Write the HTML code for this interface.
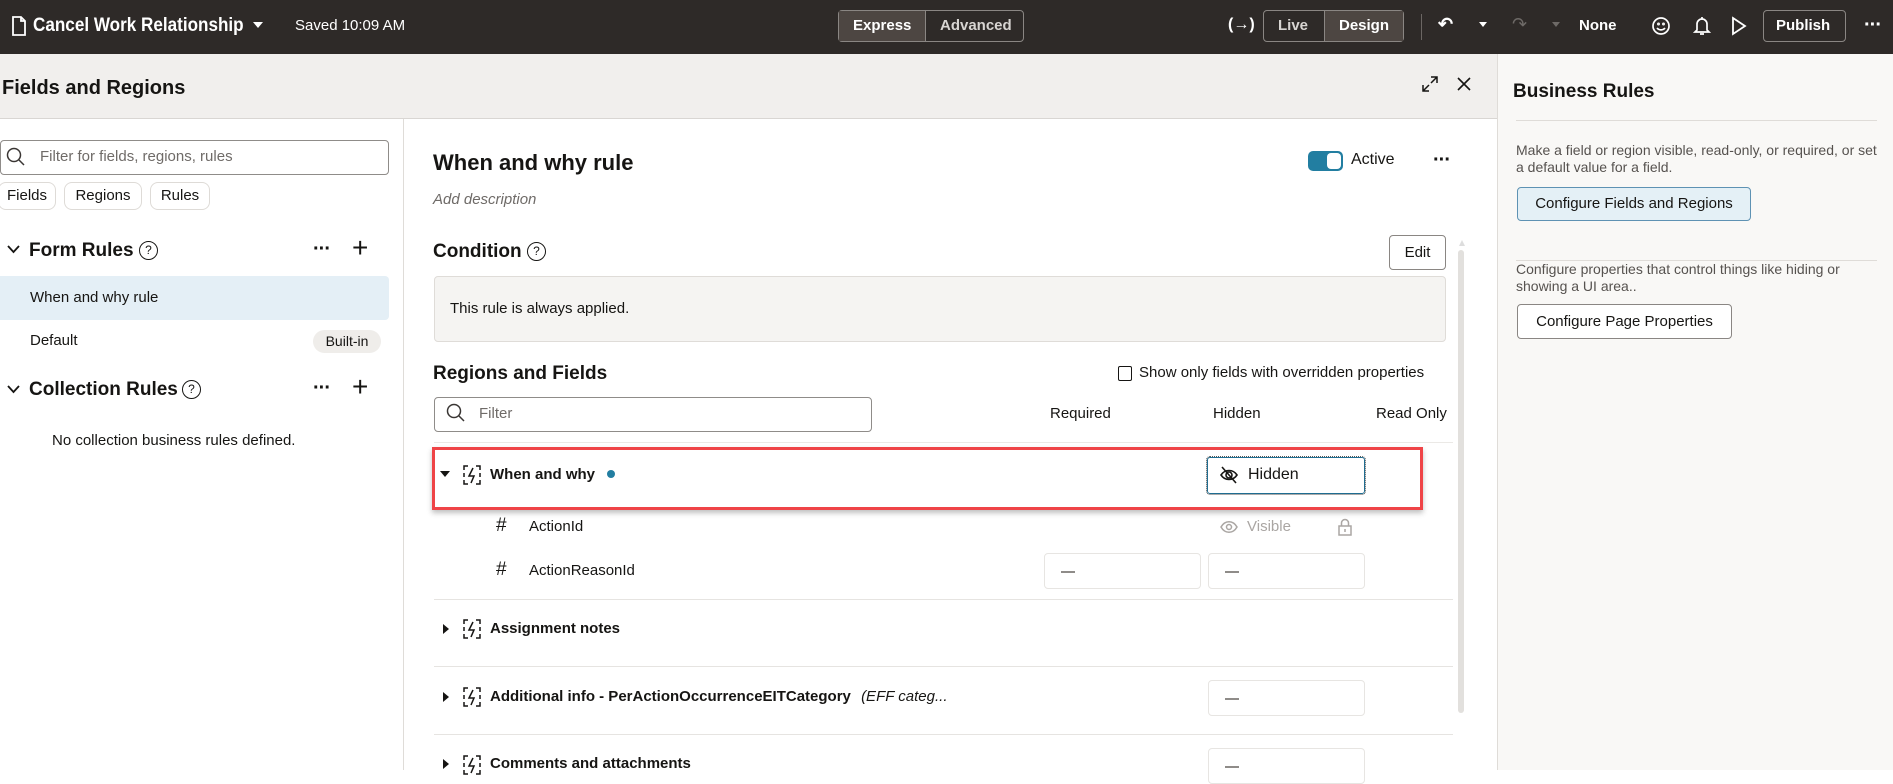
<!DOCTYPE html>
<html><head><meta charset="utf-8"><style>
*{box-sizing:border-box;margin:0;padding:0}
body{width:1893px;height:770px;overflow:hidden;background:#fff;font-family:"Liberation Sans",sans-serif;color:#161513;position:relative;font-size:15px}
.a{position:absolute;white-space:nowrap}
.hdr{left:0;top:0;width:1893px;height:54px;background:#2e2a28;color:#fff}
.seg{border:1px solid #8a8683;border-radius:4px;height:32px;top:10px;display:flex}
.seg div{padding:0 14px;line-height:30px;font-size:15px;font-weight:bold;color:#d8d5d2}
.seg .on{background:#4d4642;color:#fff}
.b{font-weight:bold}
.btn{border:1px solid #8a8683;border-radius:4px;background:#fff;font-size:15px;font-weight:bold;text-align:center}
.chip{border:1px solid #dedbd7;border-radius:8px;height:28px;line-height:26px;font-size:15px;text-align:center;top:182px}
.line{height:1px;background:#dfdcd8}
.box{border:1px solid #e7e5e2;border-radius:4px;height:36px}
.dash{width:14px;height:2px;background:#8f8c89}
.q{width:19px;height:19px;border:1.5px solid #161513;border-radius:50%;font-size:12px;text-align:center;line-height:16px}
.dots{font-weight:bold;font-size:20px;letter-spacing:-1px}
</style></head><body>
<div class="a hdr"></div>
<svg class="a" style="left:11px;top:16px" width="16" height="20" viewBox="0 0 16 20"><path d="M2 1h8l4 4v14H2z M10 1v4h4" fill="none" stroke="#fff" stroke-width="1.8"/></svg>
<div class="a b" style="left:33px;top:15px;font-size:19px;color:#fff;transform:scaleX(.9);transform-origin:left">Cancel Work Relationship</div>
<div class="a" style="left:253px;top:22px;width:0;height:0;border-left:5px solid transparent;border-right:5px solid transparent;border-top:6px solid #fff"></div>
<div class="a" style="left:295px;top:17px;font-size:15px;color:#fff">Saved 10:09 AM</div>
<div class="a seg" style="left:838px;width:186px"><div class="on" style="width:86px">Express</div><div style="border-left:1px solid #8a8683">Advanced</div></div>
<div class="a b" style="left:1228px;top:16px;color:#fff;font-size:16px">(→)</div>
<div class="a seg" style="left:1263px;width:141px"><div style="width:60px">Live</div><div class="on" style="border-left:1px solid #8a8683;flex:1">Design</div></div>
<div class="a" style="left:1421px;top:14px;width:1px;height:26px;background:#6b6663"></div>
<div class="a b" style="left:1438px;top:14px;color:#fff;font-size:18px">↶</div>
<div class="a" style="left:1479px;top:22px;border-left:4px solid transparent;border-right:4px solid transparent;border-top:5px solid #fff"></div>
<div class="a" style="left:1512px;top:14px;color:#6e6a67;font-size:18px">↷</div>
<div class="a" style="left:1552px;top:22px;border-left:4px solid transparent;border-right:4px solid transparent;border-top:5px solid #6e6a67"></div>
<div class="a b" style="left:1579px;top:17px;color:#fff;font-size:15px">None</div>
<svg class="a" style="left:1651px;top:16px" width="20" height="20" viewBox="0 0 20 20" fill="none" stroke="#fff" stroke-width="1.7"><circle cx="10" cy="10" r="8"/><path d="M6 12c2 2.5 6 2.5 8 0"/><circle cx="7.5" cy="8" r=".6"/><circle cx="12.5" cy="8" r=".6"/></svg>
<svg class="a" style="left:1693px;top:15px" width="18" height="22" viewBox="0 0 18 22" fill="none" stroke="#fff" stroke-width="1.7"><path d="M4 15V9a5 5 0 0110 0v6l2 2H2z M7 19h4 M9 2v2"/></svg>
<svg class="a" style="left:1731px;top:16px" width="16" height="20" viewBox="0 0 16 20" fill="none" stroke="#fff" stroke-width="1.8"><path d="M2 2l12 8-12 8z"/></svg>
<div class="a seg" style="left:1763px;width:83px"><div style="color:#fff;padding:0 12px">Publish</div></div>
<div class="a dots" style="left:1864px;top:14px;color:#fff">···</div>

<div class="a" style="left:0;top:54px;width:1497px;height:65px;background:#f1efed;border-bottom:1px solid #d9d6d3"></div>
<div class="a b" style="left:2px;top:77px;font-size:20px">Fields and Regions</div>
<svg class="a" style="left:1421px;top:75px" width="18" height="18" viewBox="0 0 18 18" fill="none" stroke="#161513" stroke-width="1.5"><path d="M10 2h6v6 M16 2l-6 6 M8 16H2v-6 M2 16l6-6"/></svg>
<svg class="a" style="left:1457px;top:77px" width="14" height="14" viewBox="0 0 14 14" stroke="#161513" stroke-width="1.6"><path d="M1 1l12 12M13 1L1 13"/></svg>

<div class="a" style="left:1497px;top:54px;width:396px;height:716px;background:#f9f8f6;border-left:1px solid #dfdcd8"></div>
<div class="a b" style="left:1513px;top:81px;font-size:19px">Business Rules</div>
<div class="a line" style="left:1516px;top:120px;width:361px"></div>
<div class="a" style="left:1516px;top:142px;font-size:14px;color:#56524f;line-height:17px">Make a field or region visible, read-only, or required, or set<br>a default value for a field.</div>
<div class="a btn" style="left:1517px;top:187px;width:234px;height:34px;line-height:32px;background:#e4f0f6;border-color:#5e92b3;font-weight:normal;color:#161513">Configure Fields and Regions</div>
<div class="a line" style="left:1516px;top:260px;width:361px"></div>
<div class="a" style="left:1516px;top:261px;font-size:14px;color:#56524f;line-height:17px">Configure properties that control things like hiding or<br>showing a UI area..</div>
<div class="a btn" style="left:1517px;top:304px;width:215px;height:35px;line-height:33px;font-weight:normal">Configure Page Properties</div>

<div class="a" style="left:403px;top:119px;width:1px;height:651px;background:#dfdcd8"></div>
<div class="a" style="left:0;top:140px;width:389px;height:35px;border:1px solid #8f8c89;border-radius:4px"></div>
<svg class="a" style="left:6px;top:147px" width="20" height="20" viewBox="0 0 20 20" fill="none" stroke="#3a3634" stroke-width="1.5"><circle cx="8" cy="8" r="6.5"/><path d="M13 13l5 5"/></svg>
<div class="a" style="left:40px;top:148px;font-size:15px;color:#6f6b68">Filter for fields, regions, rules</div>
<div class="a chip" style="left:-2px;width:58px">Fields</div>
<div class="a chip" style="left:64px;width:78px">Regions</div>
<div class="a chip" style="left:150px;width:60px">Rules</div>
<svg class="a" style="left:7px;top:245px" width="13" height="9" viewBox="0 0 13 9" fill="none" stroke="#161513" stroke-width="1.8"><path d="M1 1l5.5 6L12 1"/></svg>
<div class="a b" style="left:29px;top:240px;font-size:19px">Form Rules</div>
<div class="a q" style="left:139px;top:241px">?</div>
<div class="a dots" style="left:313px;top:238px">···</div>
<div class="a" style="left:352px;top:234px;font-size:28px;line-height:28px">+</div>
<div class="a" style="left:0;top:276px;width:389px;height:44px;background:#e4eff6;border-radius:0 4px 4px 0"></div>
<div class="a" style="left:30px;top:289px;font-size:15px">When and why rule</div>
<div class="a" style="left:30px;top:332px;font-size:15px">Default</div>
<div class="a" style="left:313px;top:330px;width:68px;height:23px;background:#efedea;border-radius:12px;font-size:14px;text-align:center;line-height:23px">Built-in</div>
<svg class="a" style="left:7px;top:385px" width="13" height="9" viewBox="0 0 13 9" fill="none" stroke="#161513" stroke-width="1.8"><path d="M1 1l5.5 6L12 1"/></svg>
<div class="a b" style="left:29px;top:379px;font-size:19px">Collection Rules</div>
<div class="a q" style="left:182px;top:380px">?</div>
<div class="a dots" style="left:313px;top:377px">···</div>
<div class="a" style="left:352px;top:373px;font-size:28px;line-height:28px">+</div>
<div class="a" style="left:52px;top:432px;font-size:15px">No collection business rules defined.</div>

<div class="a b" style="left:433px;top:150px;font-size:22px">When and why rule</div>
<div class="a" style="left:433px;top:191px;font-size:15px;font-style:italic;color:#6f6b68">Add description</div>
<div class="a" style="left:1308px;top:151px;width:35px;height:20px;background:#227ea1;border-radius:5px"></div>
<div class="a" style="left:1327px;top:153px;width:14px;height:16px;background:#fff;border-radius:4px"></div>
<div class="a" style="left:1351px;top:151px;font-size:16px">Active</div>
<div class="a dots" style="left:1433px;top:149px">···</div>
<div class="a b" style="left:433px;top:241px;font-size:19px">Condition</div>
<div class="a q" style="left:527px;top:242px">?</div>
<div class="a btn" style="left:1389px;top:235px;width:57px;height:35px;line-height:33px;font-weight:normal">Edit</div>
<div class="a" style="left:1459px;top:240px;width:0;height:0;border-left:3px solid transparent;border-right:3px solid transparent;border-bottom:6px solid #ddd"></div>
<div class="a" style="left:1458px;top:250px;width:6px;height:463px;background:#e2e0dd;border-radius:3px"></div>
<div class="a" style="left:434px;top:276px;width:1012px;height:66px;background:#f5f4f2;border:1px solid #dfdcd8;border-radius:4px"></div>
<div class="a" style="left:450px;top:300px;font-size:15px">This rule is always applied.</div>
<div class="a b" style="left:433px;top:363px;font-size:19px">Regions and Fields</div>
<div class="a" style="left:1118px;top:366px;width:14px;height:15px;border:1.5px solid #161513;border-radius:2px"></div>
<div class="a" style="left:1139px;top:364px;font-size:15px">Show only fields with overridden properties</div>
<div class="a" style="left:434px;top:397px;width:438px;height:35px;border:1px solid #8f8c89;border-radius:4px"></div>
<svg class="a" style="left:446px;top:403px" width="20" height="20" viewBox="0 0 20 20" fill="none" stroke="#3a3634" stroke-width="1.5"><circle cx="8" cy="8" r="6.5"/><path d="M13 13l5 5"/></svg>
<div class="a" style="left:479px;top:405px;font-size:15px;color:#6f6b68">Filter</div>
<div class="a" style="left:1050px;top:405px;font-size:15px">Required</div>
<div class="a" style="left:1213px;top:405px;font-size:15px">Hidden</div>
<div class="a" style="left:1376px;top:405px;font-size:15px">Read Only</div>
<div class="a line" style="left:434px;top:442px;width:1019px;background:#ebe9e6"></div>

<div class="a" style="left:432px;top:447px;width:991px;height:63px;border:3px solid #ef4447;box-shadow:0 3px 5px rgba(0,0,0,.25)"></div>
<div class="a" style="left:440px;top:471px;border-left:5px solid transparent;border-right:5px solid transparent;border-top:6px solid #161513"></div>
<svg class="a" style="left:463px;top:465px" width="18" height="20" viewBox="0 0 18 20" fill="none" stroke="#161513" stroke-width="1.5"><path d="M1 5V1h4 M13 1h4v4 M17 15v4h-4 M5 19H1v-4 M1 8v4 M17 8v4"/><path d="M10 3L6 11h5l-3 7" /></svg>
<div class="a b" style="left:490px;top:466px;font-size:15px">When and why</div>
<div class="a" style="left:607px;top:470px;width:8px;height:8px;border-radius:50%;background:#227ea1"></div>
<div class="a" style="left:1207px;top:457px;width:158px;height:37px;border:1.5px solid #1f6d91;border-radius:3px;outline:1px dotted #555;outline-offset:0"></div>
<svg class="a" style="left:1219px;top:466px" width="20" height="18" viewBox="0 0 20 18" fill="none" stroke="#161513" stroke-width="1.6"><path d="M2 9c4-6 12-6 16 0-4 6-12 6-16 0z"/><circle cx="10" cy="9" r="3"/><path d="M3 1l14 16"/></svg>
<div class="a" style="left:1248px;top:466px;font-size:16px">Hidden</div>

<div class="a" style="left:496px;top:515px;font-size:19px">#</div>
<div class="a" style="left:529px;top:518px;font-size:15px">ActionId</div>
<svg class="a" style="left:1220px;top:520px" width="18" height="14" viewBox="0 0 18 14" fill="none" stroke="#aaa6a3" stroke-width="1.5"><path d="M1 7c4-7 12-7 16 0-4 7-12 7-16 0z"/><circle cx="9" cy="7" r="2.5"/></svg>
<div class="a" style="left:1247px;top:518px;font-size:15px;color:#aaa6a3">Visible</div>
<svg class="a" style="left:1338px;top:518px" width="14" height="18" viewBox="0 0 14 18" fill="none" stroke="#aaa6a3" stroke-width="1.5"><rect x="1" y="8" width="12" height="9"/><path d="M3.5 8V5a3.5 3.5 0 017 0v3"/><path d="M7 11v3"/></svg>
<div class="a" style="left:496px;top:559px;font-size:19px">#</div>
<div class="a" style="left:529px;top:562px;font-size:15px">ActionReasonId</div>
<div class="a box" style="left:1044px;top:553px;width:157px"></div><div class="a dash" style="left:1061px;top:571px"></div>
<div class="a box" style="left:1208px;top:553px;width:157px"></div><div class="a dash" style="left:1225px;top:571px"></div>
<div class="a line" style="left:434px;top:599px;width:1019px;background:#e6e4e1"></div>

<div class="a" style="left:443px;top:624px;border-top:5px solid transparent;border-bottom:5px solid transparent;border-left:6px solid #161513"></div>
<svg class="a" style="left:463px;top:619px" width="18" height="20" viewBox="0 0 18 20" fill="none" stroke="#161513" stroke-width="1.5"><path d="M1 5V1h4 M13 1h4v4 M17 15v4h-4 M5 19H1v-4 M1 8v4 M17 8v4"/><path d="M10 3L6 11h5l-3 7"/></svg>
<div class="a b" style="left:490px;top:620px;font-size:15px">Assignment notes</div>
<div class="a line" style="left:434px;top:666px;width:1019px;background:#e6e4e1"></div>

<div class="a" style="left:443px;top:692px;border-top:5px solid transparent;border-bottom:5px solid transparent;border-left:6px solid #161513"></div>
<svg class="a" style="left:463px;top:687px" width="18" height="20" viewBox="0 0 18 20" fill="none" stroke="#161513" stroke-width="1.5"><path d="M1 5V1h4 M13 1h4v4 M17 15v4h-4 M5 19H1v-4 M1 8v4 M17 8v4"/><path d="M10 3L6 11h5l-3 7"/></svg>
<div class="a b" style="left:490px;top:688px;font-size:15px">Additional info - PerActionOccurrenceEITCategory <i style="font-weight:normal;margin-left:6px">(EFF categ...</i></div>
<div class="a box" style="left:1208px;top:680px;width:157px"></div><div class="a dash" style="left:1225px;top:698px"></div>
<div class="a line" style="left:434px;top:734px;width:1019px;background:#e6e4e1"></div>

<div class="a" style="left:443px;top:759px;border-top:5px solid transparent;border-bottom:5px solid transparent;border-left:6px solid #161513"></div>
<svg class="a" style="left:463px;top:755px" width="18" height="20" viewBox="0 0 18 20" fill="none" stroke="#161513" stroke-width="1.5"><path d="M1 5V1h4 M13 1h4v4 M17 15v4h-4 M5 19H1v-4 M1 8v4 M17 8v4"/><path d="M10 3L6 11h5l-3 7"/></svg>
<div class="a b" style="left:490px;top:755px;font-size:15px">Comments and attachments</div>
<div class="a box" style="left:1208px;top:748px;width:157px"></div><div class="a dash" style="left:1225px;top:766px"></div>
</body></html>
